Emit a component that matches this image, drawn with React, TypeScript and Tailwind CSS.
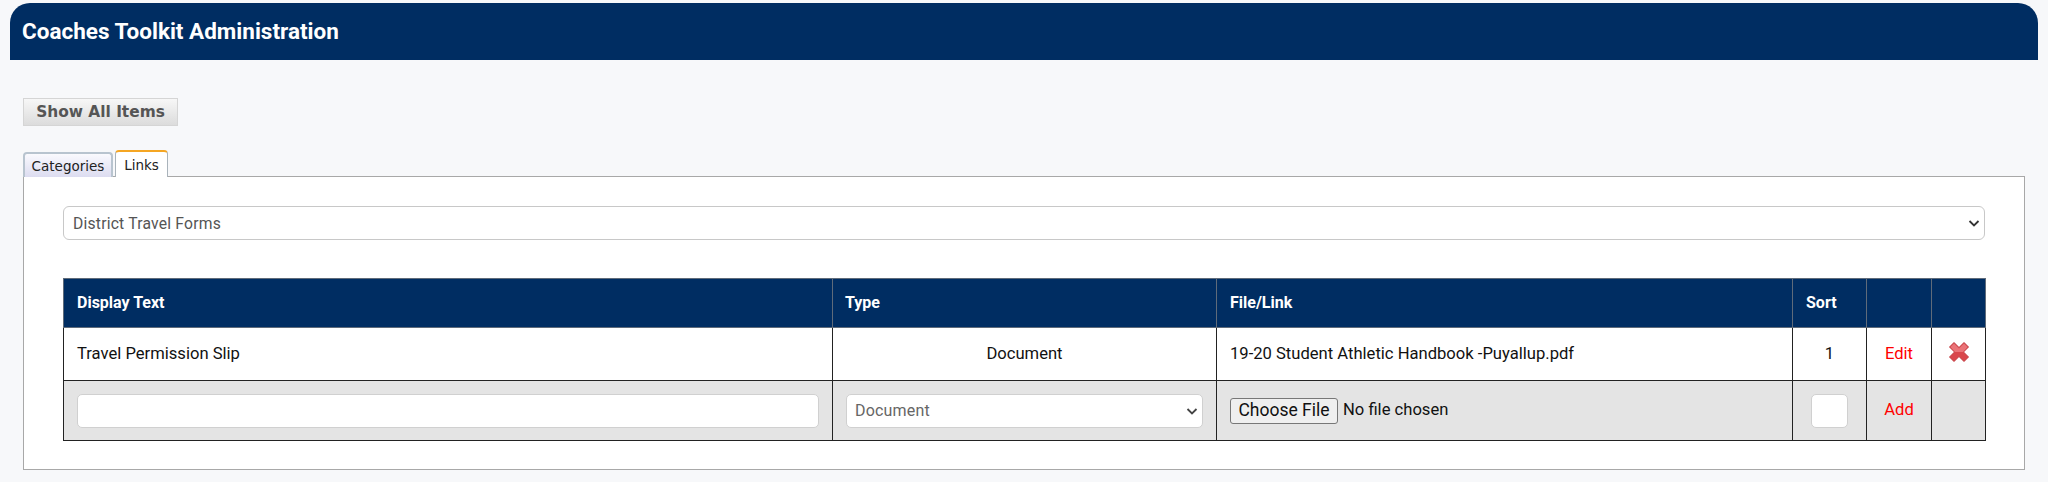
export default function App() {
  const th = "border border-[#5f6b7a] px-[13px] text-left align-middle font-bold text-[16px] text-white";
  const td = "border border-[#222] align-middle";
  return (
    <div className="h-[482px] overflow-hidden bg-[#f7f8fa] pt-[3px] font-['Roboto',sans-serif] text-[16.6px] text-[#111]">
      <div className="mx-[10px] flex h-[57px] items-center rounded-t-[20px] bg-[#002d62] pl-[12px] pt-[1px] text-[22.5px] font-bold text-white">
        Coaches Toolkit Administration
      </div>
      <div className="mx-[23px] mt-[38px]">
        <button className="block h-[28px] w-[155px] border border-[#d5d5d5] bg-gradient-to-b from-[#f7f7f7] to-[#dcdcdc] pt-[2px] text-center font-['DejaVu_Sans',sans-serif] text-[15.4px] font-bold text-[#555]">
          Show All Items
        </button>
        <div className="relative z-10 mt-[25px] flex h-[25px] items-end gap-[2px] font-['DejaVu_Sans',sans-serif] text-[13.5px]">
          <div className="mb-[-1px] flex h-[25px] w-[90px] items-center justify-center rounded-t-[4px] border-2 border-b-0 border-[#b8c4cf] bg-gradient-to-b from-[#fafafe] to-[#dcdcf0] pt-[2px] text-[#222]">
            Categories
          </div>
          <div className="mb-[-1px] flex h-[27px] w-[53px] items-center justify-center rounded-t-[4px] border border-b-0 border-t-2 border-[#a9b3bb] border-t-[#f5a623] bg-white pt-[2px] text-[#222]">
            Links
          </div>
        </div>
        <div className="h-[294px] w-[2002px] border border-[#a8a8a8] bg-white px-[39px] pt-[29px]">
          <div className="relative flex h-[34px] w-[1922px] items-center rounded-[6px] border border-[#c8c8c8] bg-white pl-[9px] pt-[1px] text-[15.7px] tracking-[0.2px] text-[#555]">
            District Travel Forms
            <svg className="absolute right-[3px] top-[10px] h-[12px] w-[14px]" viewBox="0 0 14 12" fill="none" stroke="#333" strokeWidth="1.8">
              <path d="M2.5 4l4.5 4.5L11.5 4" />
            </svg>
          </div>
          <table className="mt-[38px] w-[1922px] table-fixed border-collapse">
            <colgroup>
              <col className="w-[769px]" />
              <col className="w-[384px]" />
              <col className="w-[576px]" />
              <col className="w-[74px]" />
              <col className="w-[65px]" />
              <col className="w-[54px]" />
            </colgroup>
            <thead>
              <tr className="h-[49px] bg-[#002d62]">
                <th className={th}>Display Text</th>
                <th className={`${th} pl-[12px]`}>Type</th>
                <th className={th}>File/Link</th>
                <th className={th}>Sort</th>
                <th className={th}></th>
                <th className={th}></th>
              </tr>
            </thead>
            <tbody>
              <tr className="h-[53px] bg-white">
                <td className={`${td} px-[13px]`}>Travel Permission Slip</td>
                <td className={`${td} text-center`}>Document</td>
                <td className={`${td} px-[13px]`}>19-20 Student Athletic Handbook -Puyallup.pdf</td>
                <td className={`${td} text-center`}>1</td>
                <td className={`${td} text-center text-[#ff0000]`}>Edit</td>
                <td className={`${td}`}>
                  <svg className="mx-auto mt-[-5px] h-[22px] w-[22px]" viewBox="0 0 22 22">
                    <path d="M6 1.5 11 6.5 16 1.5 20.5 6 15.5 11 20.5 16 16 20.5 11 15.5 6 20.5 1.5 16 6.5 11 1.5 6Z" fill="#d9474c" stroke="#c23a3f" strokeWidth="1" strokeLinejoin="round" />
                    <path d="M6 2.5 11 7.5 16 2.5 19.5 6 15 11 7 11 2.5 6Z" fill="#ea7478" />
                  </svg>
                </td>
              </tr>
              <tr className="h-[60px] bg-[#e4e4e4]">
                <td className={`${td} px-[13px]`}>
                  <div className="h-[34px] w-full rounded-[5px] border border-[#d0d0d0] bg-white" />
                </td>
                <td className={`${td} px-[13px]`}>
                  <div className="relative flex h-[34px] items-center rounded-[5px] border border-[#d0d0d0] bg-white pl-[8px] text-[16px] tracking-[0.2px] text-[#666]">
                    Document
                    <svg className="absolute right-[3px] top-[10px] h-[12px] w-[14px]" viewBox="0 0 14 12" fill="none" stroke="#444" strokeWidth="1.8">
                      <path d="M2.5 4l4.5 4.5L11.5 4" />
                    </svg>
                  </div>
                </td>
                <td className={`${td} pl-[13px]`}>
                  <div className="flex items-center">
                    <span className="flex h-[26px] w-[108px] items-center justify-center rounded-[3px] border border-[#777] bg-[#efefef] text-[17.5px] text-[#111]">Choose File</span>
                    <span className="ml-[5px]">No file chosen</span>
                  </div>
                </td>
                <td className={`${td}`}>
                  <div className="mx-auto h-[34px] w-[37px] rounded-[5px] border border-[#d0d0d0] bg-white" />
                </td>
                <td className={`${td} text-center text-[#ff0000]`}>Add</td>
                <td className={td}></td>
              </tr>
            </tbody>
          </table>
        </div>
      </div>
    </div>
  );
}
